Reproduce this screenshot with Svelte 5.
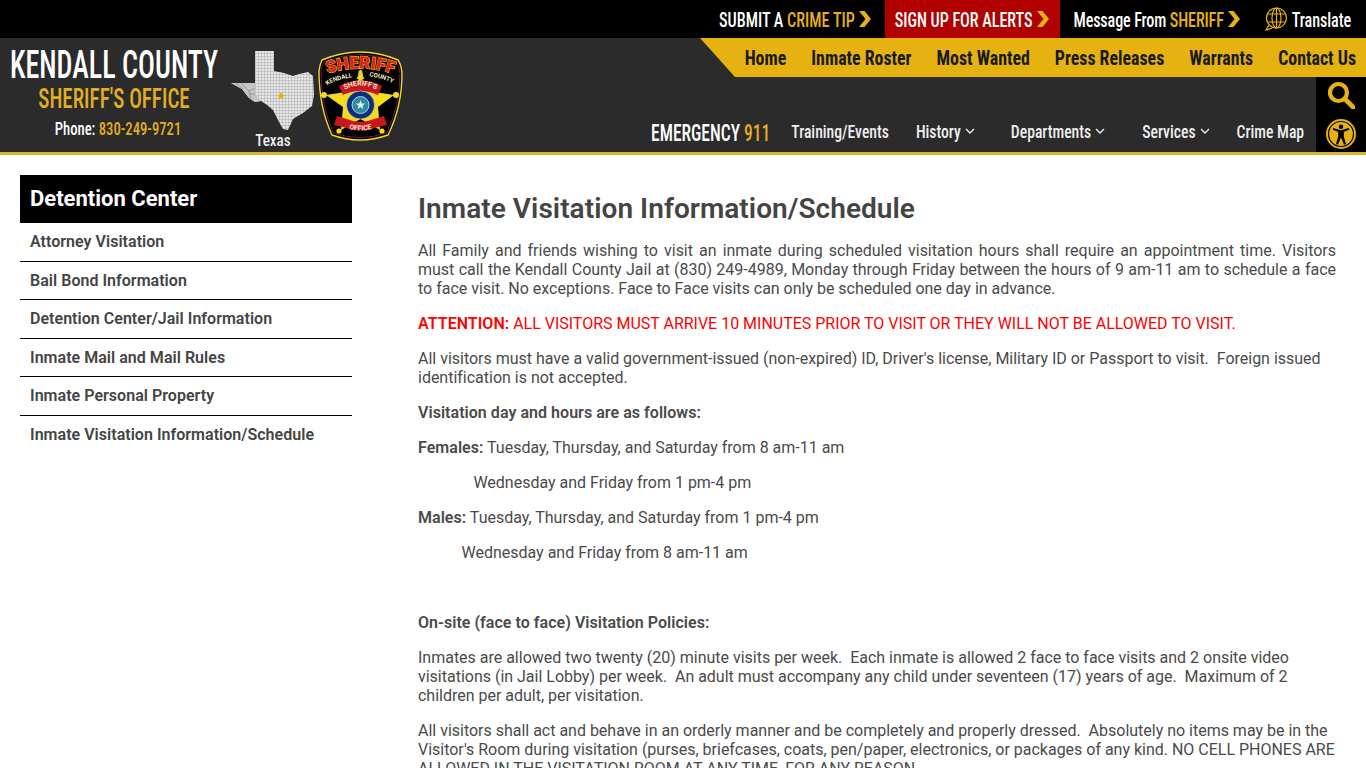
<script>
  const side = ['Attorney Visitation','Bail Bond Information','Detention Center/Jail Information','Inmate Mail and Mail Rules','Inmate Personal Property','Inmate Visitation Information/Schedule'];
  const mainNav = ['Home','Inmate Roster','Most Wanted','Press Releases','Warrants','Contact Us'];
</script>

<div class="top">
  <a class="tl"><span class="sy">SUBMIT A <em>CRIME TIP</em></span><svg class="chev" viewBox="0 0 12 16"><path d="M0 0h5.500L12 8l-6.500 8H0l6.500-8z"/></svg></a>
  <a class="tl red"><span class="sy">SIGN UP FOR ALERTS</span><svg class="chev" viewBox="0 0 12 16"><path d="M0 0h5.500L12 8l-6.500 8H0l6.500-8z"/></svg></a>
  <a class="tl msg"><span class="sy">Message From <em>SHERIFF</em></span><svg class="chev" viewBox="0 0 12 16"><path d="M0 0h5.500L12 8l-6.500 8H0l6.500-8z"/></svg></a>
  <a class="tl trans">
    <svg class="globe" viewBox="0 0 24 24" fill="none" stroke="#e6b212" stroke-width="1.200"><circle cx="12.500" cy="11" r="10"/><ellipse cx="12.500" cy="11" rx="4.500" ry="10"/><path d="M12.500 1v20M3.500 7h18M3.500 15h18M5 18l-3 5 6-2"/></svg>
    <span class="sy">Translate</span>
  </a>
</div>

<header>
  <div class="brand">
    <div class="kc">KENDALL COUNTY</div>
    <div class="so">SHERIFF'S OFFICE</div>
    <div class="ph">Phone: <em>830-249-9721</em></div>
  </div>
  <div class="texas">
    <svg viewBox="0 0 84 82" width="84" height="82">
      <defs>
        <pattern id="g" width="3" height="3" patternUnits="userSpaceOnUse"><rect width="3" height="3" fill="#e6e6e6"/><path d="M3 0H0V3" fill="none" stroke="#868686" stroke-width=".6"/></pattern>
      </defs>
      <path fill="url(#g)" d="M24 1H43V21L53 23 62 26 68 24 77 22 82 26 83 45 81 56 72 63 62 69 57 80 52 79 48 72 42 60 36 55 30 51 24 52 18 48 11 39 0 33 10 33 24 33Z"/>
      <path fill="#c4c4c4" d="M0 33 10 33 24 33V44L30 51 24 52 18 48 11 39Z"/>
      <path fill="none" stroke="#858585" stroke-width=".7" d="M10 33 18 41 24 38M18 41 20 49M24 44 18 44M5 33 12 39"/>
      <path fill="#d8b32a" d="M50 42l1.400 2.400 2.600.5-1.800 1.900.4 2.600-2.600-1.100-2.600 1.100.4-2.600-1.800-1.900 2.600-.5z"/>
    </svg>
    <span>Texas</span>
  </div>
  <svg class="badge" viewBox="0 0 85 94" width="85" height="94">
    <defs>
      <path id="a1" d="M6 26Q42 13 79 26"/>
      <path id="a2" d="M8 37Q16 31 36 28"/>
      <path id="a3" d="M49 27Q66 29 76 35"/>
      <path id="a4" d="M24 42Q42 31 61 42"/>
      <path id="a5" d="M23 77Q42 86 62 77"/>
    </defs>
    <path fill="#000" stroke="#e9dc2a" stroke-width="1.400" d="M4 11Q42-5 80 11 83 15 84 24 84 58 70 86 42 96 14 86 1 58 1 22 2 15 4 11Z"/>
    <path fill="none" stroke="#7a1440" stroke-width="1" d="M6 13Q42-2 78 13 81 17 82 24 82 57 68.500 84 42 93 15.500 84 3 57 3 22 4 17 6 13Z"/>
    <text class="b-sh"><textPath href="#a1" startOffset="50%" text-anchor="middle">SHERIFF</textPath></text>
    <text class="b-sm"><textPath href="#a2" startOffset="50%" text-anchor="middle">KENDALL</textPath></text>
    <text class="b-sm"><textPath href="#a3" startOffset="50%" text-anchor="middle">COUNTY</textPath></text>
    <path fill="#efd21f" d="M40.500 23a2 2 0 0 1 4 0l.5 4 1.500 3h-8l1.500-3z"/>
    <path fill="#f4dd1e" d="M42.500 26 50 42 76 46 60 58 62 81 42.500 70 23 81 25 58 8 46 35 42Z"/>
    <circle cx="6" cy="46" r="3" fill="#f4dd1e"/><circle cx="78" cy="46" r="3" fill="#f4dd1e"/>
    <circle cx="21" cy="82" r="2.600" fill="#f4dd1e"/><circle cx="64" cy="82" r="2.600" fill="#f4dd1e"/>
    <path fill="#c8161d" d="M21 37Q42 26 64 37L60 46Q42 38 25 46Z"/>
    <path fill="#c8161d" d="M19 67 29 70Q42 76 56 70L66 67 69 76 60 78Q42 85 25 78L16 76Z"/>
    <text class="b-r"><textPath href="#a4" startOffset="50%" text-anchor="middle">SHERIFF'S</textPath></text>
    <text class="b-r"><textPath href="#a5" startOffset="50%" text-anchor="middle">OFFICE</textPath></text>
    <circle cx="42.500" cy="56" r="14" fill="#0d2f7a" stroke="#d8d8d8" stroke-width=".6"/>
    <circle cx="42.500" cy="56" r="8.500" fill="#2f8ba0" stroke="#dfe8ee" stroke-width=".8"/>
    <path fill="#e8eef0" d="M42.500 51l1.200 3.400 3.600.1-2.900 2.200 1 3.400-2.900-2-2.900 2 1-3.400-2.900-2.200 3.600-.1z"/>
  </svg>
  <div class="right">
    <nav class="main">
      {#each mainNav as n}<a>{n}</a>{/each}
    </nav>
    <div class="lower">
      <nav class="sub">
        <a class="em"><span>EMERGENCY <em>911</em></span></a>
        <a class="s1"><span>Training/Events</span></a>
        <a class="s2"><span>History</span><svg class="dn" viewBox="0 0 10 6"><path d="M1 1l4 4 4-4"/></svg></a>
        <a class="s3"><span>Departments</span><svg class="dn" viewBox="0 0 10 6"><path d="M1 1l4 4 4-4"/></svg></a>
        <a class="s4"><span>Services</span><svg class="dn" viewBox="0 0 10 6"><path d="M1 1l4 4 4-4"/></svg></a>
        <a class="s5"><span>Crime Map</span></a>
      </nav>
      <div class="tools">
        <svg width="28" height="28" viewBox="0 0 28 28" fill="none" stroke="#e6b212"><circle cx="11.500" cy="11.500" r="8.500" stroke-width="4.200"/><path d="M18 18l8 8" stroke-width="4.600" stroke-linecap="round"/></svg>
        <svg width="32" height="32" viewBox="0 0 32 32"><circle cx="16" cy="16" r="15" fill="#e6b212"/><circle cx="16" cy="16" r="12.500" fill="none" stroke="#000" stroke-width="1.200"/><circle cx="16" cy="8.800" r="2.300" fill="#000"/><path fill="#000" d="M7.500 11.500 8.300 10 16 12.200 23.700 10 24.500 11.500 18.800 14V18.500L21 26 19 26.700 16.300 20H15.700L13 26.700 11 26 13.200 18.500V14Z"/></svg>
      </div>
    </div>
  </div>
</header>

<main>
  <aside>
    <h2>Detention Center</h2>
    <ul>{#each side as s}<li><a>{s}</a></li>{/each}</ul>
  </aside>
  <article>
    <h1>Inmate Visitation Information/Schedule</h1>
    <p class="just">All Family and friends wishing to visit an inmate during scheduled visitation hours shall require an appointment time. Visitors must call the Kendall County Jail at (830) 249-4989, Monday through Friday between the hours of 9 am-11 am to schedule a face to face visit. No exceptions. Face to Face visits can only be scheduled one day in advance.</p>
    <p class="att"><strong>ATTENTION:</strong> ALL VISITORS MUST ARRIVE 10 MINUTES PRIOR TO VISIT OR THEY WILL NOT BE ALLOWED TO VISIT.</p>
    <p>All visitors must have a valid government-issued (non-expired) ID, Driver's license, Military ID or Passport to visit.&nbsp; Foreign issued identification is not accepted.</p>
    <p><strong>Visitation day and hours are as follows:</strong></p>
    <p><strong>Females:</strong> Tuesday, Thursday, and Saturday from 8 am-11 am</p>
    <p>&nbsp;&nbsp;&nbsp;&nbsp;&nbsp;&nbsp;&nbsp;&nbsp;&nbsp;&nbsp;&nbsp;&nbsp;&nbsp;&nbsp;Wednesday and Friday from 1 pm-4 pm</p>
    <p><strong>Males:</strong> Tuesday, Thursday, and Saturday from 1 pm-4 pm</p>
    <p>&nbsp;&nbsp;&nbsp;&nbsp;&nbsp;&nbsp;&nbsp;&nbsp;&nbsp;&nbsp;&nbsp;Wednesday and Friday from 8 am-11 am</p>
    <p>&nbsp;</p>
    <p><strong>On-site (face to face) Visitation Policies:</strong></p>
    <p>Inmates are allowed two twenty (20) minute visits per week.&nbsp; Each inmate is allowed 2 face to face visits and 2 onsite video visitations (in Jail Lobby) per week.&nbsp; An adult must accompany any child under seventeen (17) years of age.&nbsp; Maximum of 2 children per adult, per visitation.</p>
    <p>All visitors shall act and behave in an orderly manner and be completely and properly dressed.&nbsp; Absolutely no items may be in the Visitor's Room during visitation (purses, briefcases, coats, pen/paper, electronics, or packages of any kind. NO CELL PHONES ARE ALLOWED IN THE VISITATION ROOM AT ANY TIME, FOR ANY REASON.</p>
  </article>
</main>

<style>
  :global(body) { margin: 0; background: #fff; font-family: Roboto, sans-serif; color: #444; }
  em { font-style: normal; }
  a { color: inherit; text-decoration: none; }

  .top, .kc, .so, .ph, .em, .main, .sub, .texas span { font-stretch: 75%; }

  .top { height: 38px; background: #000; display: flex; justify-content: flex-end; align-items: stretch; padding-right: 15px; color: #fff; font-size: 16.200px; font-weight: 500; }
  .tl { display: flex; align-items: center; white-space: pre; }
  .tl em { color: #e6b212; }
  .sy { display: inline-block; transform: scaleY(1.3); }
  .chev { width: 12px; height: 16px; margin-left: 4px; fill: #e6b212; }
  .red { background: #b00000; padding: 0 11px 0 10px; margin-left: 14px; letter-spacing: -.05px; }
  .msg { margin-left: 14px; letter-spacing: -.15px; }
  .trans { margin-left: 24px; gap: 4px; letter-spacing: -.1px; }
  .globe { width: 24px; height: 24px; }

  header { height: 114px; background: #2b2b2b; border-bottom: 3px solid #dcb22c; display: flex; }
  .brand { width: 228px; flex: none; display: flex; flex-direction: column; align-items: center; color: #fff; white-space: nowrap; }
  .kc { font-size: 28.100px; line-height: 40px; margin-top: 8px; font-weight: 500; transform: scaleY(1.35); }
  .so { font-size: 21px; line-height: 32px; color: #e0ae20; margin-top: -3px; font-weight: 500; transform: scaleY(1.33); }
  .ph { font-size: 14.700px; line-height: 22px; margin: 3px 0 0 8px; font-weight: 500; transform: scaleY(1.28); }
  .ph em { color: #e0ae20; }
  .texas { flex: none; margin-left: 3px; width: 84px; padding-top: 12px; display: flex; flex-direction: column; align-items: center; color: #eee; font-size: 15.200px; font-weight: 500; line-height: 18px; }
  .texas span { transform: scaleY(1.1); margin: -1px 0 0 0; }
  .badge { flex: none; margin: 11px 0 0 3px; }
  .b-sh { font: 900 17px Roboto, sans-serif; fill: #e0201d; stroke: #ecd521; stroke-width: 1px; paint-order: stroke; }
  .b-sm { font: 700 6.200px Roboto, sans-serif; fill: #f4efc4; }
  .b-r { font: 700 7px Roboto, sans-serif; fill: #f7ecd6; }

  .right { flex: 1; display: flex; flex-direction: column; min-width: 0; }
  .main { margin-left: 297px; height: 39px; background: #e6b212; clip-path: polygon(0 0, 100% 0, 100% 100%, 35px 100%); display: flex; justify-content: flex-end; align-items: center; gap: 25px; padding-right: 10px; color: #1a1a1a; font-size: 17.880px; font-weight: 700; }
  .main a { display: block; transform: scaleY(1.1); }
  .lower { flex: 1; display: flex; }
  .sub { flex: 1; min-width: 0; display: flex; align-items: center; padding-top: 33px; color: #eee; font-size: 15.700px; font-weight: 500; }
  .sub a { display: flex; align-items: center; white-space: pre; }
  .sub span { display: block; transform: scaleY(1.12); }
  .em { margin: 4px 0 0 248px; font-size: 17.500px; color: #fff; }
  .sub .em span { transform: scaleY(1.4); }
  .em em { color: #e0ae20; }
  .s1 { margin-left: 21px; }
  .s2 { margin-left: 27px; }
  .s3 { margin-left: 36px; }
  .s4 { margin-left: 37px; }
  .s5 { margin-left: 27px; }
  .dn { width: 10px; height: 6px; margin-left: 4px; fill: none; stroke: #eee; stroke-width: 1.400; }
  .tools { width: 50px; flex: none; background: #000; display: flex; flex-direction: column; align-items: center; justify-content: space-between; padding: 4px 0 2px; box-sizing: border-box; }

  main { display: flex; padding: 20px 30px 0 20px; gap: 66px; }
  aside { width: 332px; flex: none; }
  h2 { margin: 0; height: 48px; line-height: 48px; background: #000; color: #fff; font-size: 22px; font-weight: 700; padding-left: 10px; }
  ul { list-style: none; margin: 0; padding: 0; }
  li { border-bottom: 1px solid #000; font-size: 16px; font-weight: 600; line-height: 19px; padding: 9px 10px 9.500px; letter-spacing: .03px; }
  li:last-child { border-bottom: 0; }
  article { flex: 1; min-width: 0; font-size: 16px; line-height: 19px; letter-spacing: -0.01px; color: #4a4a4a; }
  h1 { margin: 0 0 16px; font-size: 28px; line-height: 33px; font-weight: 600; padding-top: 17px; color: #444; letter-spacing: .05px; }
  p { margin: 0 0 16px; }
  strong { font-weight: 600; letter-spacing: .04px; }
  .just { text-align: justify; }
  .att { color: #f00; }
</style>
